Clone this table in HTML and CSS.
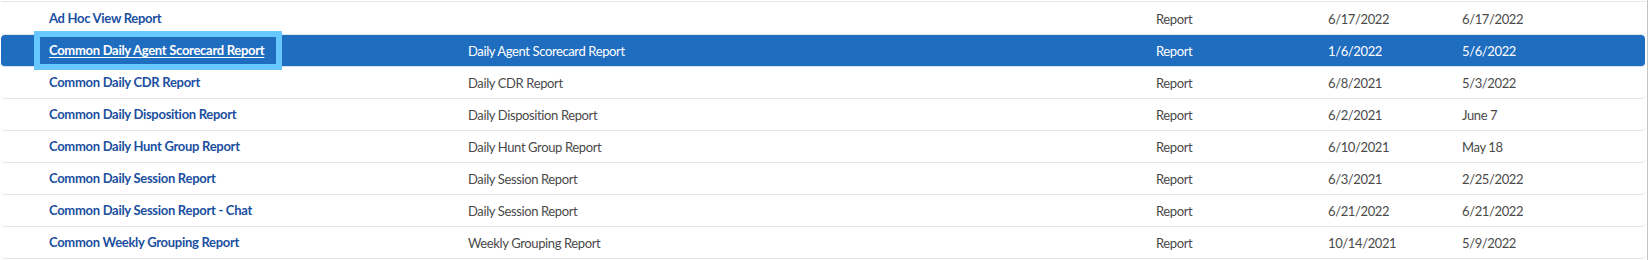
FILE: index.html
```html
<!DOCTYPE html>
<html lang="en">
<head>
<meta charset="utf-8">
<title>Reports</title>
<link rel="stylesheet" href="styles.css">
</head>
<body>
<div class="list">
  <div class="row">
    <div class="cell name"><a class="link" href="#">Ad Hoc View Report</a></div>
    <div class="cell"></div>
    <div class="cell">Report</div>
    <div class="cell">6/17/2022</div>
    <div class="cell">6/17/2022</div>
  </div>
  <div class="row selected">
    <div class="cell name"><a class="link focused" href="#">Common Daily Agent Scorecard Report</a></div>
    <div class="cell">Daily Agent Scorecard Report</div>
    <div class="cell">Report</div>
    <div class="cell">1/6/2022</div>
    <div class="cell">5/6/2022</div>
  </div>
  <div class="row">
    <div class="cell name"><a class="link" href="#">Common Daily CDR Report</a></div>
    <div class="cell">Daily CDR Report</div>
    <div class="cell">Report</div>
    <div class="cell">6/8/2021</div>
    <div class="cell">5/3/2022</div>
  </div>
  <div class="row">
    <div class="cell name"><a class="link" href="#">Common Daily Disposition Report</a></div>
    <div class="cell">Daily Disposition Report</div>
    <div class="cell">Report</div>
    <div class="cell">6/2/2021</div>
    <div class="cell">June 7</div>
  </div>
  <div class="row">
    <div class="cell name"><a class="link" href="#">Common Daily Hunt Group Report</a></div>
    <div class="cell">Daily Hunt Group Report</div>
    <div class="cell">Report</div>
    <div class="cell">6/10/2021</div>
    <div class="cell">May 18</div>
  </div>
  <div class="row">
    <div class="cell name"><a class="link" href="#">Common Daily Session Report</a></div>
    <div class="cell">Daily Session Report</div>
    <div class="cell">Report</div>
    <div class="cell">6/3/2021</div>
    <div class="cell">2/25/2022</div>
  </div>
  <div class="row">
    <div class="cell name"><a class="link" href="#">Common Daily Session Report - Chat</a></div>
    <div class="cell">Daily Session Report</div>
    <div class="cell">Report</div>
    <div class="cell">6/21/2022</div>
    <div class="cell">6/21/2022</div>
  </div>
  <div class="row">
    <div class="cell name"><a class="link" href="#">Common Weekly Grouping Report</a></div>
    <div class="cell">Weekly Grouping Report</div>
    <div class="cell">Report</div>
    <div class="cell">10/14/2021</div>
    <div class="cell">5/9/2022</div>
  </div>
</div>
</body>
</html>
```
FILE: styles.css
```css
html, body {
  margin: 0;
  padding: 0;
  background: #ffffff;
}

body {
  font-family: Lato, "Liberation Sans", sans-serif;
  font-size: 13px;
  letter-spacing: -0.38px;
  color: #4a4a4a;
  overflow: hidden;
}

.list {
  width: 1648px;
  height: 260px;
  border-right: 1px solid #c4c4c4;
  box-sizing: border-box;
  margin: 0;
  padding: 1px 1px 0 1px;
}

.list::before {
  content: "";
  display: block;
  height: 1px;
  background: #e3e7ec;
  margin-bottom: 1px;
}

.row {
  display: grid;
  grid-template-columns: 428px 688px 172px 134px 1fr;
  align-items: center;
  height: 31px;
  padding-left: 39px;
  border-bottom: 1px solid #dfe5ec;
  border-radius: 4px;
  box-sizing: content-box;
  margin-right: 1px;
}

.cell {
  white-space: nowrap;
}

.name {
  display: flex;
  align-items: center;
}

.link {
  display: inline-block;
  padding: 0 12px 0 9px;
  line-height: 27px;
  color: #1b4f9f;
  font-weight: 700;
  letter-spacing: -0.29px;
  text-decoration: none;
}

.row.selected {
  background: #1f6dbf;
  border-bottom-color: #d6e2ef;
  color: #ffffff;
}

.row.selected .link {
  color: #ffffff;
  text-decoration: underline;
  text-underline-offset: 2px;
}

.link.focused {
  outline: 6px solid #66c8ff;
}
```
